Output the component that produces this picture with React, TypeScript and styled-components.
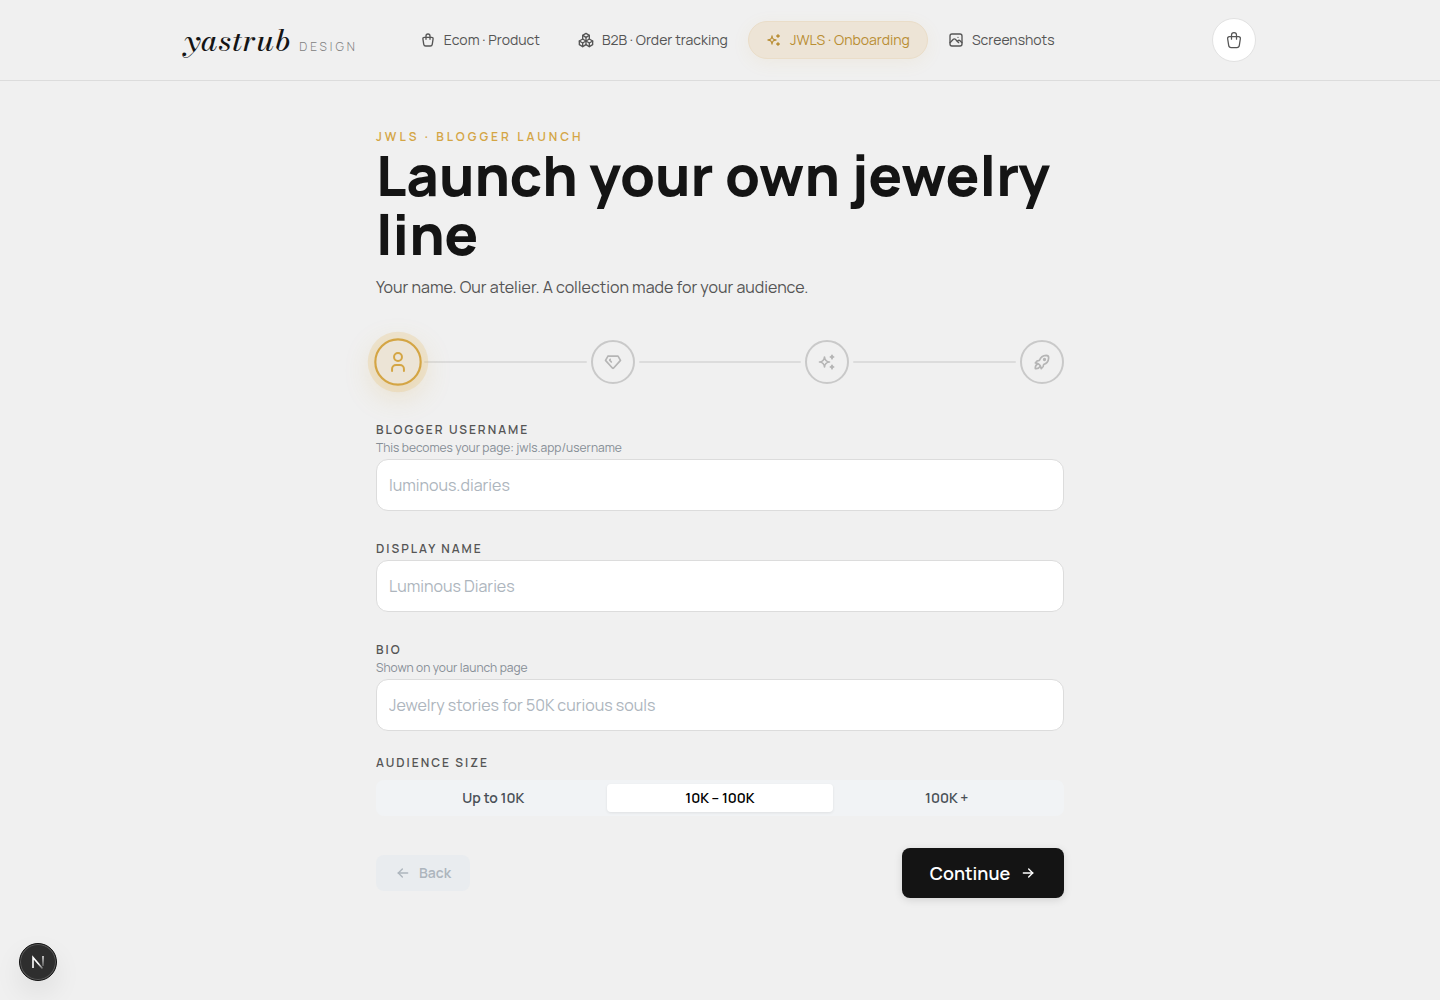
import { useState } from "react";
import type { ReactNode } from "react";
import styled, { createGlobalStyle, css } from "styled-components";
import {
  TbArrowLeft,
  TbArrowRight,
  TbDiamond,
  TbPackages,
  TbPhoto,
  TbRocket,
  TbShoppingBag,
  TbSparkles,
  TbUser,
} from "react-icons/tb";

const color = {
  page: "#f0f0f0",
  ink: "#141414",
  text: "#555555",
  muted: "#868e96",
  placeholder: "#adb5bd",
  line: "#dcdcdc",
  gold: "#d4a544",
  goldDark: "#b98e34",
};

const GlobalStyle = createGlobalStyle`
  *, *::before, *::after { box-sizing: border-box; }
  body {
    margin: 0;
    background: ${color.page};
    color: ${color.ink};
    font-family: Manrope, Inter, "Open Sans", sans-serif;
    font-size: 16px;
  }
  button, input { font-family: inherit; }
`;

const Header = styled.header`
  border-bottom: 1px solid ${color.line};
`;

const HeaderInner = styled.div`
  display: flex;
  align-items: center;
  max-width: 1120px;
  height: 80px;
  margin: 0 auto;
  padding: 0 24px;
`;

const Brand = styled.a`
  display: flex;
  align-items: baseline;
  gap: 8px;
  color: ${color.ink};
  text-decoration: none;
`;

const BrandName = styled.span`
  font-family: "Bodoni Moda", "Liberation Serif", serif;
  font-size: 30px;
  line-height: 40px;
  font-style: italic;
  font-weight: 500;
  letter-spacing: 1px;
`;

const BrandTag = styled.span`
  color: #808080;
  font-size: 12px;
  font-weight: 300;
  letter-spacing: 3px;
`;

const Nav = styled.nav`
  display: flex;
  gap: 2px;
  margin-left: 44px;
`;

const NavLink = styled.a<{ $active?: boolean }>`
  display: flex;
  align-items: center;
  gap: 8px;
  height: 38px;
  padding: 0 17px;
  border: 1px solid transparent;
  border-radius: 19px;
  color: ${color.text};
  font-size: 14px;
  line-height: 20px;
  text-decoration: none;
  white-space: nowrap;
  ${(p) =>
    p.$active &&
    css`
      background: #ede4d6;
      border-color: #eaddc8;
      color: ${color.goldDark};
      box-shadow: 0 4px 18px rgba(212, 162, 60, 0.08);
    `}
`;

const CartButton = styled.button`
  display: grid;
  place-items: center;
  width: 44px;
  height: 44px;
  margin-left: auto;
  padding: 0;
  border: 1px solid #e2e2e2;
  border-radius: 50%;
  background: #fff;
  color: ${color.text};
`;

const Main = styled.main`
  max-width: 720px;
  margin: 0 auto;
  padding: 48px 16px 64px;
`;

const Eyebrow = styled.p`
  margin: 0;
  color: ${color.gold};
  font-size: 12px;
  line-height: 16px;
  font-weight: 600;
  letter-spacing: 3px;
`;

const Title = styled.h1`
  margin: 0 0 12px;
  font-size: 56px;
  line-height: 59px;
  font-weight: 800;
`;

const Lead = styled.p`
  margin: 0 0 41px;
  color: ${color.text};
  font-size: 16px;
  line-height: 24px;
`;

const Steps = styled.ol`
  display: flex;
  align-items: center;
  gap: 4px;
  margin: 0 0 37px;
  padding: 0;
  list-style: none;
`;

const Step = styled.li`
  display: flex;
  align-items: center;
  gap: 4px;
  flex: 1;
  &:last-child { flex: none; }
  &:not(:last-child)::after {
    content: "";
    flex: 1;
    height: 2px;
    border-radius: 1px;
    background: ${color.line};
  }
`;

const StepDot = styled.button<{ $active: boolean }>`
  display: grid;
  place-items: center;
  width: 44px;
  height: 44px;
  padding: 0;
  border: 2px solid #c9c9c9;
  border-radius: 50%;
  background: transparent;
  color: #b5b5b5;
  ${(p) =>
    p.$active &&
    css`
      border-color: ${color.gold};
      background: #ece4d6;
      color: ${color.gold};
      transform: scale(1.08);
      box-shadow: 0 0 0 6px rgba(232, 190, 110, 0.25),
        0 8px 28px rgba(212, 162, 60, 0.25);
    `}
`;

const Form = styled.form`
  display: flex;
  flex-direction: column;
`;

const FieldBox = styled.div`
  display: flex;
  flex-direction: column;
  margin-bottom: 29px;
`;

const labelText = css`
  color: ${color.text};
  font-size: 12px;
  line-height: 18px;
  font-weight: 600;
  letter-spacing: 2px;
  text-transform: uppercase;
`;

const Label = styled.label`
  ${labelText}
`;

const Hint = styled.span`
  color: ${color.muted};
  font-size: 12px;
  line-height: 18px;
`;

const TextInput = styled.input`
  height: 52px;
  margin-top: 2px;
  padding: 0 12px;
  border: 1px solid ${color.line};
  border-radius: 12px;
  background: #fff;
  color: ${color.ink};
  font-size: 16px;
  outline-color: ${color.gold};
  &::placeholder { color: ${color.placeholder}; opacity: 1; }
`;

const Group = styled.fieldset`
  margin: -6px 0 32px;
  padding: 0;
  border: 0;
`;

const Legend = styled.legend`
  ${labelText}
  padding: 0;
  margin-bottom: 8px;
`;

const Segments = styled.div`
  display: grid;
  grid-template-columns: repeat(3, 1fr);
  padding: 4px;
  border-radius: 8px;
  background: #f1f3f5;
`;

const Segment = styled.label`
  position: relative;
  display: grid;
  place-items: center;
  height: 28px;
  border-radius: 4px;
  color: #495057;
  font-size: 14px;
  line-height: 20px;
  font-weight: 600;
  cursor: pointer;
  &:has(input:checked) {
    background: #fff;
    color: #000;
    box-shadow: 0 1px 3px rgba(0, 0, 0, 0.08);
  }
`;

const HiddenRadio = styled.input`
  position: absolute;
  inset: 0;
  margin: 0;
  opacity: 0;
  cursor: pointer;
`;

const Actions = styled.div`
  display: flex;
  align-items: center;
  justify-content: space-between;
`;

const BackButton = styled.button`
  display: flex;
  align-items: center;
  gap: 8px;
  height: 36px;
  padding: 0 19px;
  border: 0;
  border-radius: 8px;
  background: #e9ecef;
  color: ${color.placeholder};
  font-size: 14px;
  line-height: 20px;
  font-weight: 600;
`;

const ContinueButton = styled.button`
  display: flex;
  align-items: center;
  justify-content: center;
  gap: 10px;
  min-width: 162px;
  height: 50px;
  padding: 0 26px;
  border: 0;
  border-radius: 8px;
  background: ${color.ink};
  color: #fff;
  font-size: 18px;
  font-weight: 600;
  box-shadow: 0 2px 8px rgba(0, 0, 0, 0.12);
  cursor: pointer;
`;

const DevBadge = styled.button`
  position: fixed;
  left: 19px;
  bottom: 19px;
  display: grid;
  place-items: center;
  width: 38px;
  height: 38px;
  padding: 0;
  border: 1px solid #111;
  border-radius: 50%;
  background: #2e2e2e;
  box-shadow: inset 0 0 0 1px #5a5a5a, 0 12px 28px rgba(0, 0, 0, 0.08);
`;

const NAV = [
  { label: "Ecom · Product", icon: TbShoppingBag },
  { label: "B2B · Order tracking", icon: TbPackages },
  { label: "JWLS · Onboarding", icon: TbSparkles, active: true },
  { label: "Screenshots", icon: TbPhoto },
];

const STEPS = [
  { label: "Profile", icon: TbUser },
  { label: "Collection", icon: TbDiamond },
  { label: "Style", icon: TbSparkles },
  { label: "Launch", icon: TbRocket },
];

const SIZES = ["Up to 10K", "10K – 100K", "100K +"];

type FieldProps = { id: string; label: string; hint?: ReactNode; placeholder: string };

function Field({ id, label, hint, placeholder }: FieldProps) {
  return (
    <FieldBox>
      <Label htmlFor={id}>{label}</Label>
      {hint && <Hint id={`${id}-hint`}>{hint}</Hint>}
      <TextInput
        id={id}
        type="text"
        placeholder={placeholder}
        aria-describedby={hint ? `${id}-hint` : undefined}
      />
    </FieldBox>
  );
}

function NextMark() {
  return (
    <svg width="14" height="14" viewBox="0 0 14 14" fill="none" aria-hidden="true">
      <defs>
        <linearGradient id="mark-diagonal" x1="8" y1="8" x2="12" y2="13" gradientUnits="userSpaceOnUse">
          <stop stopColor="#fff" />
          <stop offset="1" stopColor="#fff" stopOpacity="0.3" />
        </linearGradient>
        <linearGradient id="mark-stem" x1="0" y1="1" x2="0" y2="11" gradientUnits="userSpaceOnUse">
          <stop stopColor="#fff" stopOpacity="0.7" />
          <stop offset="1" stopColor="#fff" stopOpacity="0.2" />
        </linearGradient>
      </defs>
      <path d="M2 13V2.5L11.5 13.5" stroke="url(#mark-diagonal)" strokeWidth="1.6" />
      <rect x="11" y="1" width="2" height="10" fill="url(#mark-stem)" />
    </svg>
  );
}

export default function App() {
  const [size, setSize] = useState(SIZES[1]);
  const [step, setStep] = useState(0);

  return (
    <>
      <GlobalStyle />
      <Header>
        <HeaderInner>
          <Brand href="#">
            <BrandName>yastrub</BrandName>
            <BrandTag>DESIGN</BrandTag>
          </Brand>
          <Nav aria-label="Projects">
            {NAV.map(({ label, icon: Icon, active }) => (
              <NavLink key={label} href="#" $active={active} aria-current={active ? "page" : undefined}>
                <Icon size={16} />
                {label}
              </NavLink>
            ))}
          </Nav>
          <CartButton type="button" aria-label="Open cart">
            <TbShoppingBag size={20} strokeWidth={1.5} />
          </CartButton>
        </HeaderInner>
      </Header>

      <Main>
        <Eyebrow>JWLS · BLOGGER LAUNCH</Eyebrow>
        <Title>Launch your own jewelry line</Title>
        <Lead>Your name. Our atelier. A collection made for your audience.</Lead>

        <Steps>
          {STEPS.map(({ label, icon: Icon }, i) => (
            <Step key={label}>
              <StepDot
                type="button"
                $active={i === step}
                aria-label={label}
                aria-current={i === step ? "step" : undefined}
                onClick={() => setStep(i)}
              >
                <Icon size={i === step ? 22 : 20} />
              </StepDot>
            </Step>
          ))}
        </Steps>

        <Form onSubmit={(e) => e.preventDefault()}>
          <Field
            id="username"
            label="Blogger username"
            hint="This becomes your page: jwls.app/username"
            placeholder="luminous.diaries"
          />
          <Field id="display-name" label="Display name" placeholder="Luminous Diaries" />
          <Field
            id="bio"
            label="Bio"
            hint="Shown on your launch page"
            placeholder="Jewelry stories for 50K curious souls"
          />
          <Group>
            <Legend>Audience size</Legend>
            <Segments>
              {SIZES.map((option) => (
                <Segment key={option}>
                  <HiddenRadio
                    type="radio"
                    name="audience"
                    value={option}
                    checked={size === option}
                    onChange={() => setSize(option)}
                  />
                  {option}
                </Segment>
              ))}
            </Segments>
          </Group>
          <Actions>
            <BackButton type="button" disabled>
              <TbArrowLeft size={16} />
              Back
            </BackButton>
            <ContinueButton type="submit">
              Continue
              <TbArrowRight size={16} />
            </ContinueButton>
          </Actions>
        </Form>
      </Main>

      <DevBadge type="button" aria-label="Open developer tools">
        <NextMark />
      </DevBadge>
    </>
  );
}
